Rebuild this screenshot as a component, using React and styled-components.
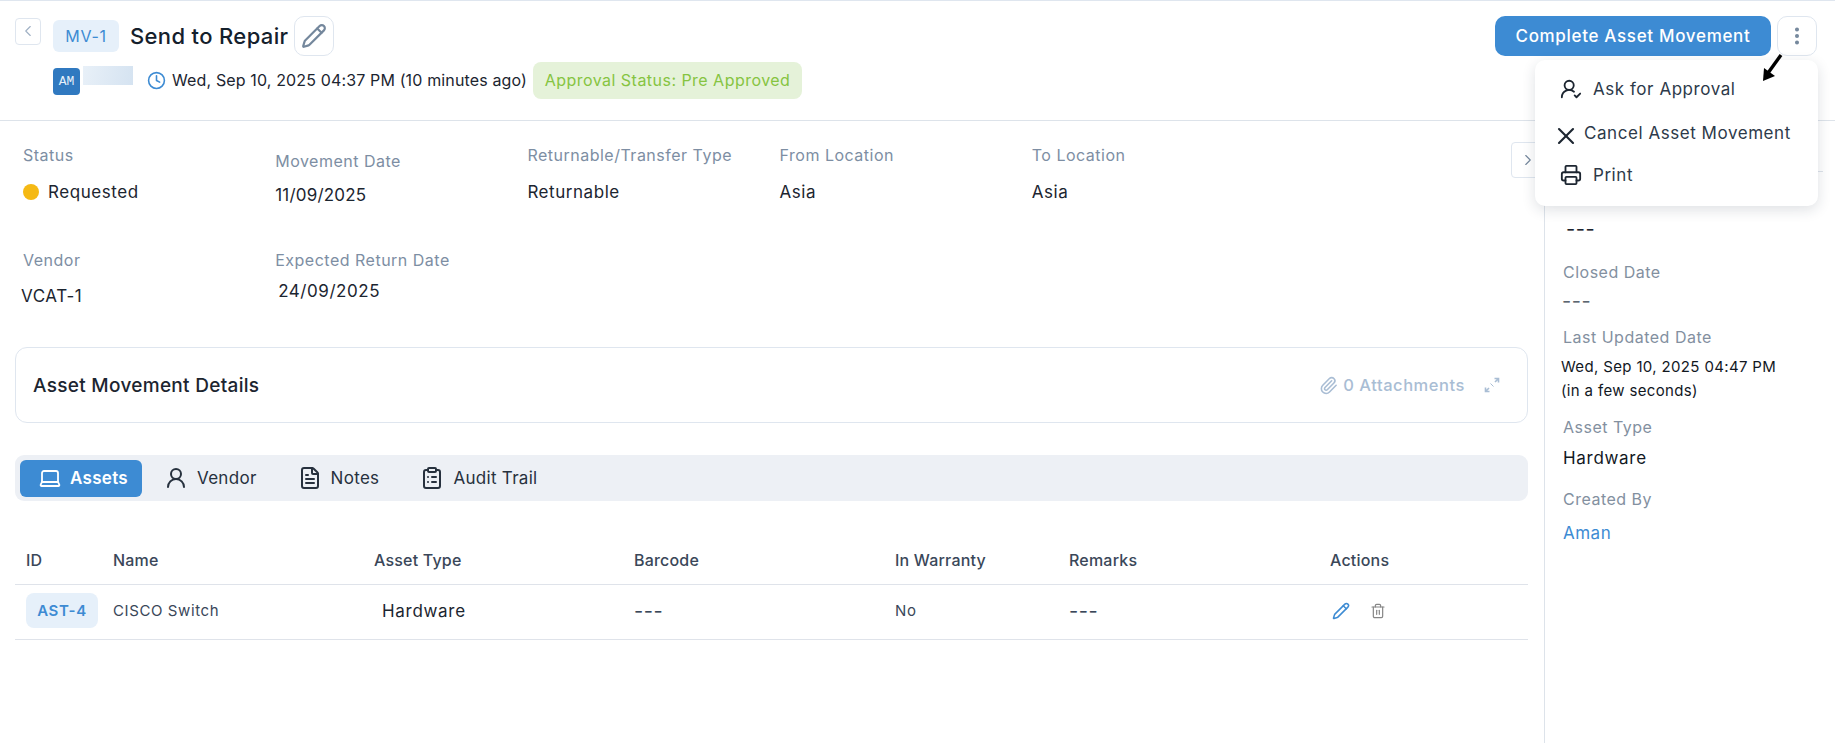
import React from "react";
import styled, { createGlobalStyle } from "styled-components";
import { ChevronLeft, ChevronRight, Pencil, Clock, UserRoundCheck, X, Printer, Laptop, UserRound, FileText, ClipboardList, Paperclip, Trash2, EllipsisVertical } from "lucide-react";

const Global = createGlobalStyle`
  html, body { margin: 0; padding: 0; background: #fff; }
  body { font-family: Inter, "Open Sans", sans-serif; color: #1c2530; }
  * { box-sizing: border-box; }
`;
const Page = styled.div`
  position: relative; width: 1835px; height: 743px; overflow: hidden;
  border-top: 1px solid #dfe6ef; background: #fff;
`;
const Header = styled.header`
  height: 120px; border-bottom: 1px solid #dde3ea; display: flex; justify-content: space-between;
  padding: 15px 18px 0 15px;
`;
const HeaderLeft = styled.div`display: flex; flex-direction: column; gap: 5px;`;
const TitleRow = styled.div`display: flex; align-items: center; height: 40px;`;
const BackButton = styled.button`
  width: 26px; height: 27px; padding: 0; margin-right: 12px; margin-bottom: 10px; display: flex; align-items: center; justify-content: center;
  background: #fff; border: 1px solid #dfe6ef; border-radius: 4px; color: #9fb0c4;
`;
const CodePill = styled.span`
  display: inline-flex; align-items: center; justify-content: center; width: 66px; height: 32px; margin-right: 11px;
  background: #e6f0fa; border-radius: 6px; color: #3d8bd3; font-size: 16px; letter-spacing: .7px;
`;
const Title = styled.h1`margin: 0 6px 0 0; font-size: 22px; font-weight: 500; color: #14202c; letter-spacing: .35px; white-space: nowrap;`;
const IconBox = styled.button`
  width: 40px; height: 40px; padding: 0; display: flex; align-items: center; justify-content: center;
  background: #fff; border: 1px solid #dfe6ef; border-radius: 10px; color: #74879c;
`;
const MetaRow = styled.div`display: flex; align-items: center; padding-left: 38px; height: 38px;`;
const Avatar = styled.span`
  display: flex; align-items: center; justify-content: center; width: 27px; height: 27px; margin-right: 3px; margin-top: 2px;
  border-radius: 4px; background: #3079c0; color: #e6f0fa; font: 13px "Liberation Mono", monospace;
`;
const BlurName = styled.span`
  width: 50px; height: 19px; margin-right: 14px; margin-bottom: 10px;
  background: linear-gradient(100deg, #e8f0f8, #d5e3f1);
`;
const ClockMark = styled(Clock)`color: #3d8bd3; margin-right: 6px; flex: none;`;
const MetaText = styled.span`font-size: 16px; color: #1c2530; white-space: nowrap; margin-right: 6px; letter-spacing: .14px;`;
const ApprovalBadge = styled.span`
  display: inline-flex; align-items: center; justify-content: center; width: 269px; height: 37px; border-radius: 8px;
  background: #e5f2d9; color: #86c441; font-size: 16px; white-space: nowrap; letter-spacing: .47px;
`;
const HeaderRight = styled.div`display: flex; gap: 6px; align-items: flex-start;`;
const PrimaryButton = styled.button`
  width: 276px; height: 40px; border: 0; border-radius: 10px; background: #3d8bd3; color: #fff;
  font: 500 17px Inter, sans-serif; letter-spacing: .68px; white-space: nowrap;
`;
const Body = styled.div`display: flex; height: 622px;`;
const Main = styled.main`width: 1545px; border-right: 1px solid #dde3ea; padding: 0 16px 0 15px; flex: none;`;
const FieldGrid = styled.div`
  display: grid; grid-template-columns: repeat(5, 252.2px); grid-template-rows: 105px 96px; padding: 24px 0 0 8px;
`;
const Field = styled.div`padding-top: ${p => p.$top || 0}px;`;
const Label = styled.div`font-size: 16px; line-height: 20px; color: #7d8ea3; white-space: nowrap; letter-spacing: .5px;`;
const Value = styled.div`
  display: flex; align-items: center; gap: 9px; font-size: 17px; line-height: 22px; color: #1c2530; white-space: nowrap;
  margin-top: ${p => p.$gap}px; margin-left: ${p => p.$shift || 0}px; letter-spacing: ${p => p.$ls || .55}px;
`;
const Dot = styled.span`width: 16px; height: 16px; border-radius: 50%; background: #f5b914;`;
const Card = styled.section`
  height: 76px; margin-top: 1px; padding: 0 27px 0 17px; display: flex; align-items: center; justify-content: space-between;
  border: 1px solid #dfe6ef; border-radius: 12px;
`;
const CardTitle = styled.h2`margin: 0; font-size: 19px; font-weight: 500; color: #1c2530; letter-spacing: .3px;`;
const Attach = styled.div`display: flex; align-items: center; color: #a9bdd4; font-size: 16.5px; font-weight: 500; letter-spacing: .55px;`;
const AttachClip = styled(Paperclip)`margin-right: 5px;`;
const ExpandMark = styled.svg`margin-left: 19px;`;
const TabBar = styled.nav`
  height: 46px; margin-top: 32px; padding: 4px 5px; display: flex; align-items: center; gap: 0;
  background: #edf0f5; border-radius: 9px;
`;
const Tab = styled.div`
  display: flex; align-items: center; gap: ${p => p.$active ? 8 : 9}px; height: 37px; padding: ${p => p.$active ? "0 14px 0 18px" : "0 0 0 22px"};
  margin-right: ${p => p.$active ? 0 : 19}px;
  border-radius: 6px; font-size: 17px; letter-spacing: .3px; font-weight: ${p => p.$active ? 600 : 400};
  background: ${p => p.$active ? "#3d8bd3" : "transparent"}; color: ${p => p.$active ? "#fff" : "#27313e"};
`;
const Table = styled.div`margin-top: 34px;`;
const Row = styled.div`
  display: grid; grid-template-columns: 87px 261px 260px 261px 174px 261px 1fr; align-items: center;
  height: ${p => p.$head ? 50 : 55}px; border-bottom: 1px solid #dfe3ea; padding: ${p => p.$head ? "0 0 0 11px" : "0 0 3px 11px"};
`;
const HeadCell = styled.div`font-size: 16px; font-weight: 500; color: #3a4759; letter-spacing: .2px; white-space: nowrap;`;
const Cell = styled.div`font-size: 15px; color: #3a4759; letter-spacing: .6px; white-space: nowrap;`;
const DashCell = styled(Cell)`font-size: 20px; letter-spacing: .5px;`;
const TypeCell = styled(Cell)`font-size: 17px; color: #1c2530; padding-left: 8px; letter-spacing: .7px;`;
const AssetPill = styled.span`
  display: inline-flex; align-items: center; justify-content: center; width: 72px; height: 35px; border-radius: 8px;
  background: #e6f0fa; color: #3d8bd3; font-size: 15px; font-weight: 600; letter-spacing: .6px;
`;
const Actions = styled.div`display: flex; align-items: center; gap: 20px; padding-left: 2px;`;
const Side = styled.aside`flex: 1; padding: 0 0 0 18px; display: flex; flex-direction: column; position: relative;`;
const SideRule = styled.div`height: 1px; background: #dde3ea; margin: 50px 12px 0 -18px;`;
const SideDash = styled.div`font-size: 20px; line-height: 20px; margin: 47px 0 0 3px; letter-spacing: .5px; color: #1c2530;`;
const SideLabel = styled.div`font-size: 16px; line-height: 20px; color: #83909f; margin-top: ${p => p.$top}px; letter-spacing: .5px;`;
const SideValue = styled.div`
  font-size: ${p => p.$size || 17}px; line-height: ${p => p.$lh || 22}px; margin-top: ${p => p.$top}px; margin-left: ${p => p.$shift || 0}px; color: ${p => p.$color || "#12181f"};
  letter-spacing: ${p => p.$ls || .7}px; white-space: nowrap;
`;
const SideToggle = styled.button`
  position: absolute; left: 1511px; top: 141px; width: 32px; height: 36px; padding: 0 0 0 7px; display: flex; align-items: center; justify-content: flex-start;
  background: #fff; border: 1px solid #dfe6ef; border-radius: 4px; color: #74879c;
`;
const Menu = styled.div`
  position: absolute; left: 1535px; top: 59px; width: 283px; height: 146px; background: #fff; border-radius: 10px;
  box-shadow: 0 4px 14px rgba(30, 45, 65, .14); color: #2d3a4a; z-index: 3;
  svg { color: #1c2530; }
`;
const MenuItem = styled.div`
  position: absolute; left: ${p => p.$x}px; top: ${p => p.$y}px; display: flex; align-items: center; gap: ${p => p.$gap}px;
  font-size: 17px; letter-spacing: .55px; white-space: nowrap; line-height: 24px;
`;
const CrossMark = styled(X)`margin-top: 6px;`;
const Annotation = styled.svg`position: absolute; left: 1755px; top: 50px; z-index: 4;`;

const Expand = () => (
  <ExpandMark width="16" height="16" viewBox="0 0 16 16" fill="none" stroke="#a9bdd4" strokeWidth="1.6">
    <path d="M10.5 1.5h4v4M14.5 1.5l-3.5 3.5M5.5 14.5h-4v-4M1.5 14.5l3.5-3.5" />
    <path d="M6.5 6.5 9.5 9.5" strokeWidth="1" />
  </ExpandMark>
);

export default function App() {
  return (
    <Page>
      <Global />
      <Header>
        <HeaderLeft>
          <TitleRow>
            <BackButton><ChevronLeft size={18} strokeWidth={1.5} /></BackButton>
            <CodePill>MV-1</CodePill>
            <Title>Send to Repair</Title>
            <IconBox><Pencil size={26} strokeWidth={2} /></IconBox>
          </TitleRow>
          <MetaRow>
            <Avatar>AM</Avatar>
            <BlurName />
            <ClockMark size={19} strokeWidth={2} />
            <MetaText>Wed, Sep 10, 2025 04:37 PM (10 minutes ago)</MetaText>
            <ApprovalBadge>Approval Status: Pre Approved</ApprovalBadge>
          </MetaRow>
        </HeaderLeft>
        <HeaderRight>
          <PrimaryButton>Complete Asset Movement</PrimaryButton>
          <IconBox><EllipsisVertical size={22} strokeWidth={2.4} /></IconBox>
        </HeaderRight>
      </Header>
      <Body>
        <Main>
          <FieldGrid>
            <Field>
              <Label>Status</Label>
              <Value $gap={16}><Dot />Requested</Value>
            </Field>
            <Field $top={6}>
              <Label>Movement Date</Label>
              <Value $gap={13} $ls={.2}>11/09/2025</Value>
            </Field>
            <Field>
              <Label>Returnable/Transfer Type</Label>
              <Value $gap={16}>Returnable</Value>
            </Field>
            <Field>
              <Label>From Location</Label>
              <Value $gap={16}>Asia</Value>
            </Field>
            <Field>
              <Label>To Location</Label>
              <Value $gap={16}>Asia</Value>
            </Field>
            <Field>
              <Label>Vendor</Label>
              <Value $gap={15} $shift={-2}>VCAT-1</Value>
            </Field>
            <Field>
              <Label>Expected Return Date</Label>
              <Value $gap={10} $shift={3}>24/09/2025</Value>
            </Field>
          </FieldGrid>
          <Card>
            <CardTitle>Asset Movement Details</CardTitle>
            <Attach>
              <AttachClip size={19} strokeWidth={2} />
              0 Attachments
              <Expand />
            </Attach>
          </Card>
          <TabBar>
            <Tab $active><Laptop size={24} strokeWidth={1.8} />Assets</Tab>
            <Tab><UserRound size={24} strokeWidth={2} />Vendor</Tab>
            <Tab><FileText size={24} strokeWidth={2} />Notes</Tab>
            <Tab><ClipboardList size={24} strokeWidth={2} />Audit Trail</Tab>
          </TabBar>
          <Table>
            <Row $head>
              <HeadCell>ID</HeadCell>
              <HeadCell>Name</HeadCell>
              <HeadCell>Asset Type</HeadCell>
              <HeadCell>Barcode</HeadCell>
              <HeadCell>In Warranty</HeadCell>
              <HeadCell>Remarks</HeadCell>
              <HeadCell>Actions</HeadCell>
            </Row>
            <Row>
              <div><AssetPill>AST-4</AssetPill></div>
              <Cell>CISCO Switch</Cell>
              <TypeCell>Hardware</TypeCell>
              <DashCell>---</DashCell>
              <Cell>No</Cell>
              <DashCell>---</DashCell>
              <Actions>
                <Pencil size={18} color="#3d8bd3" strokeWidth={2} />
                <Trash2 size={16} color="#868686" strokeWidth={1.8} />
              </Actions>
            </Row>
          </Table>
        </Main>
        <Side>
          <SideRule />
          <SideDash>---</SideDash>
          <SideLabel $top={23}>Closed Date</SideLabel>
          <SideValue $top={8} $color="#5c6670" $size={20} $ls={.5} $shift={-1}>---</SideValue>
          <SideLabel $top={15}>Last Updated Date</SideLabel>
          <SideValue $top={8} $size={15} $lh={24} $ls={.35} $shift={-2}>Wed, Sep 10, 2025 04:47 PM<br />(in a few seconds)</SideValue>
          <SideLabel $top={14}>Asset Type</SideLabel>
          <SideValue $top={10}>Hardware</SideValue>
          <SideLabel $top={20}>Created By</SideLabel>
          <SideValue $top={13} $color="#3d8bd3" $ls={.5}>Aman</SideValue>
        </Side>
      </Body>
      <SideToggle><ChevronRight size={18} strokeWidth={1.5} /></SideToggle>
      <Menu>
        <MenuItem $x={25} $y={17} $gap={11}><UserRoundCheck size={22} strokeWidth={2} />Ask for Approval</MenuItem>
        <MenuItem $x={17} $y={56} $gap={4}><CrossMark size={28} strokeWidth={1.8} />Cancel Asset Movement</MenuItem>
        <MenuItem $x={25} $y={103} $gap={11}><Printer size={22} strokeWidth={2} />Print</MenuItem>
      </Menu>
      <Annotation width="32" height="34" viewBox="0 0 32 34">
        <path d="M26 4 13 22" stroke="#000" strokeWidth="3.4" fill="none" />
        <path d="M8 30 9 17 20 25Z" fill="#000" />
      </Annotation>
    </Page>
  );
}
